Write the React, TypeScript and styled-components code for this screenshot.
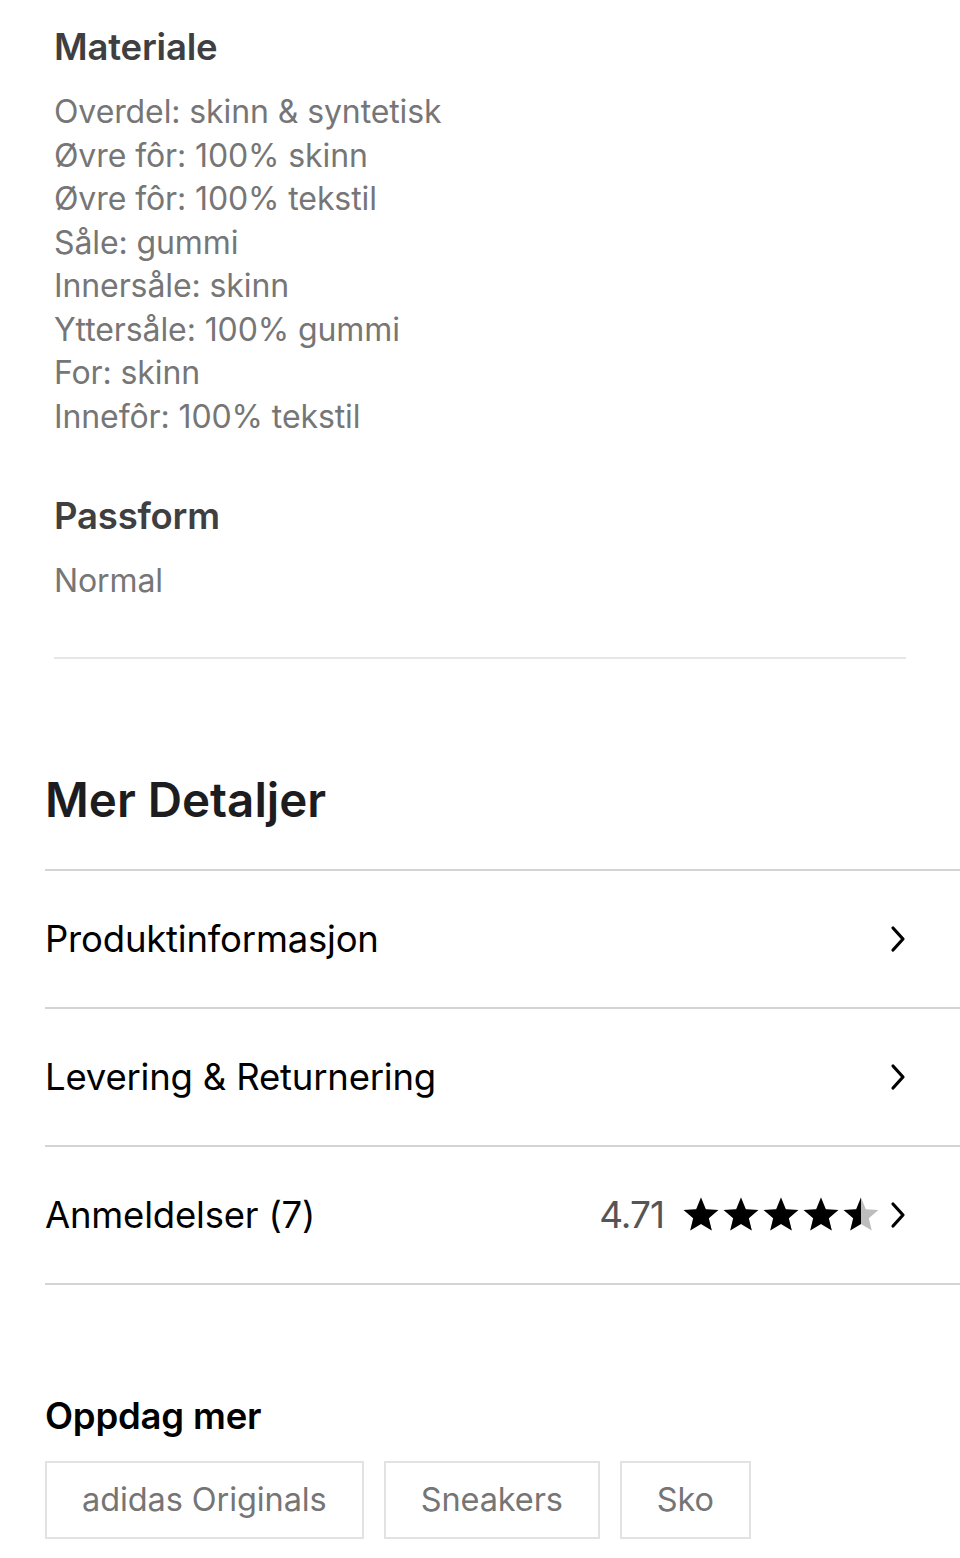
import React from 'react';
import styled, { createGlobalStyle } from 'styled-components';

const GlobalStyle = createGlobalStyle`
    body {
        margin: 0;
        background: #fff;
        font-family: Inter, "Liberation Sans", sans-serif;
    }
`;

const Page = styled.div`
    padding-left: 45px;
    padding-bottom: 18px;
`;

const SpecSection = styled.div`
    padding: 24px 54px 0 9px;
`;

const SpecTitle = styled.div<{ $spaced?: boolean }>`
    margin-top: ${(p) => (p.$spaced ? '55px' : '0')};
    font-size: 36.5px;
    line-height: 46px;
    font-weight: 600;
    color: #3f3f42;
    letter-spacing: -0.2px;
`;

const SpecList = styled.div`
    margin-top: 20px;
    font-size: 32px;
    line-height: 43.5px;
    color: #767676;
    letter-spacing: -0.1px;
`;

const Divider = styled.hr`
    margin: 54px 0 0;
    border: none;
    border-top: 2px solid #e6e6e6;
`;

const SectionTitle = styled.h2`
    margin: 112px 0 40px;
    font-size: 47.5px;
    line-height: 58px;
    font-weight: 600;
    color: #1d1d1f;
`;

const DetailList = styled.div`
    border-top: 2px solid #d4d4d4;
`;

const DetailRow = styled.div`
    display: flex;
    align-items: center;
    height: 136px;
    padding-right: 52px;
    border-bottom: 2px solid #d4d4d4;
    font-size: 36.5px;
    color: #000;
    letter-spacing: -0.2px;
`;

const RowLabel = styled.div`
    flex: 1;
`;

const Rating = styled.div`
    display: flex;
    align-items: center;
    gap: 18px;
    margin-right: 8px;
`;

const RatingValue = styled.span`
    color: #555;
    font-size: 37px;
    letter-spacing: -1px;
`;

const Stars = styled.div`
    display: flex;
    gap: 2px;
`;

const DiscoverTitle = styled.h3`
    margin: 109px 0 23px;
    font-size: 36.5px;
    line-height: 44px;
    font-weight: 600;
    color: #000;
    letter-spacing: -0.2px;
`;

const Tags = styled.div`
    display: flex;
    gap: 20px;
`;

const Tag = styled.div`
    box-sizing: border-box;
    height: 78px;
    display: flex;
    align-items: center;
    padding: 0 35px;
    border: 2px solid #e2e2e2;
    font-size: 32.5px;
    color: #757575;
    letter-spacing: -0.1px;
`;

const Chevron = () => (
    <svg width="20" height="28" viewBox="0 0 20 28">
        <path d="M5 3 L15 14 L5 25" fill="none" stroke="#000" strokeWidth="3.2" strokeLinecap="round" strokeLinejoin="round" />
    </svg>
);

const STAR = 'M19 1.5 L23.8 13.2 L36.4 14.1 L26.8 22.3 L29.8 34.6 L19 28 L8.2 34.6 L11.2 22.3 L1.6 14.1 L14.2 13.2 Z';

const Star = ({ fill }: { fill: number }) => {
    const id = `clip-${Math.round(fill * 100)}`;
    return (
        <svg width="38" height="38" viewBox="0 0 38 38">
            <defs>
                <clipPath id={id}>
                    <rect x="0" y="0" width={38 * fill} height="38" />
                </clipPath>
            </defs>
            <path d={STAR} fill="#bdbdbd" />
            <path d={STAR} fill="#000" clipPath={`url(#${id})`} />
        </svg>
    );
};

const materials = [
    'Overdel: skinn & syntetisk',
    'Øvre fôr: 100% skinn',
    'Øvre fôr: 100% tekstil',
    'Såle: gummi',
    'Innersåle: skinn',
    'Yttersåle: 100% gummi',
    'For: skinn',
    'Innefôr: 100% tekstil',
];

const App = () => {
    const rating = 4.71;
    const starFills = [0, 1, 2, 3, 4].map((i) => {
        const f = Math.min(1, Math.max(0, rating - i));
        return f === 1 || f === 0 ? f : 0.5;
    });

    return (
        <Page>
            <GlobalStyle />
            <SpecSection>
                <SpecTitle>Materiale</SpecTitle>
                <SpecList>
                    {materials.map((m) => (
                        <div key={m}>{m}</div>
                    ))}
                </SpecList>
                <SpecTitle $spaced>Passform</SpecTitle>
                <SpecList>Normal</SpecList>
                <Divider />
            </SpecSection>

            <SectionTitle>Mer Detaljer</SectionTitle>
            <DetailList>
                <DetailRow>
                    <RowLabel>Produktinformasjon</RowLabel>
                    <Chevron />
                </DetailRow>
                <DetailRow>
                    <RowLabel>Levering &amp; Returnering</RowLabel>
                    <Chevron />
                </DetailRow>
                <DetailRow>
                    <RowLabel>Anmeldelser (7)</RowLabel>
                    <Rating>
                        <RatingValue>{rating}</RatingValue>
                        <Stars>
                            {starFills.map((f, i) => (
                                <Star key={i} fill={f} />
                            ))}
                        </Stars>
                    </Rating>
                    <Chevron />
                </DetailRow>
            </DetailList>

            <DiscoverTitle>Oppdag mer</DiscoverTitle>
            <Tags>
                <Tag>adidas Originals</Tag>
                <Tag>Sneakers</Tag>
                <Tag>Sko</Tag>
            </Tags>
        </Page>
    );
};

export default App;
